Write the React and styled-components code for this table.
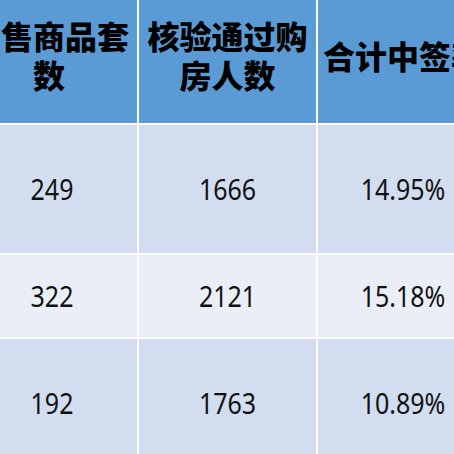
import React from 'react'
import styled, { createGlobalStyle } from 'styled-components'

const GlobalStyle = createGlobalStyle`
    html, body {
        margin: 0;
        padding: 0;
        background: #ffffff;
        overflow: hidden;
    }
`

const rows = [
    { sold: '249', checked: '1666', rate: '14.95%', band: 'dark', height: 128 },
    { sold: '322', checked: '2121', rate: '15.18%', band: 'light', height: 82 },
    { sold: '192', checked: '1763', rate: '10.89%', band: 'dark', height: 128 },
]

function App() {
    return (
        <>
            <GlobalStyle />
            <TableWrapper>
                <HeadCell>可售商品套<br />数</HeadCell>
                <HeadCell>核验通过购<br />房人数</HeadCell>
                <HeadCell>合计中签率</HeadCell>
                {rows.map((row) => (
                    <React.Fragment key={row.sold}>
                        <Cell $band={row.band} $height={row.height} $shift={3}><Num>{row.sold}</Num></Cell>
                        <Cell $band={row.band} $height={row.height}><Num>{row.checked}</Num></Cell>
                        <Cell $band={row.band} $height={row.height}><Num>{row.rate}</Num></Cell>
                    </React.Fragment>
                ))}
            </TableWrapper>
        </>
    )
}

const TableWrapper = styled.div`
    display: grid;
    grid-template-columns: 176px 177px 170px;
    gap: 2px;
    background: #ffffff;
    margin: -13px 0 0 -39px;
    width: max-content;
`

const HeadCell = styled.div`
    height: 136px;
    background: #5b9bd5;
    display: flex;
    align-items: center;
    justify-content: center;
    text-align: center;
    white-space: nowrap;
    font-family: "Noto Sans CJK SC", "Noto Sans", sans-serif;
    font-weight: 900;
    font-size: 32px;
    line-height: 39px;
    color: #000000;
`

const Cell = styled.div`
    height: ${(p) => p.$height}px;
    background: ${(p) => (p.$band === 'dark' ? '#d2deef' : '#eaeff7')};
    display: flex;
    align-items: center;
    justify-content: center;
    padding-left: ${(p) => (p.$shift || 0) * 2}px;
    box-sizing: border-box;
`

const Num = styled.span`
    display: inline-block;
    font-family: "Noto Sans", "Open Sans", sans-serif;
    font-size: 25px;
    line-height: 30px;
    color: #111111;
    transform: scaleY(1.16);
    margin-top: -3px;
`

export default App
